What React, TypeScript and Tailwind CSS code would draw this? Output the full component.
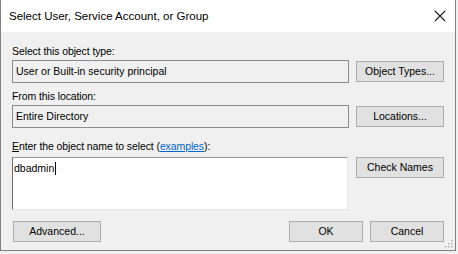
import React from "react";

const font = { fontFamily: '"Liberation Sans", Arial, sans-serif' };

const Button = ({ label, className = "" }: { label: React.ReactNode; className?: string }) => (
  <div
    className={`flex h-[21px] items-center justify-center border border-[#adadad] bg-[#e1e1e1] text-[10.5px] text-black ${className}`}
  >
    {label}
  </div>
);

const ReadOnlyBox = ({ value }: { value: string }) => (
  <div className="flex h-[23px] w-[337px] items-center border border-[#8c8c8c] bg-[#f0f0f0] pl-[3px] text-[10.5px] text-black">
    {value}
  </div>
);

const Label = ({ children }: { children: React.ReactNode }) => (
  <div className="h-[14px] text-[10.5px] leading-[14px] tracking-[-0.1px] text-black">{children}</div>
);

export default function App() {
  return (
    <div className="h-[254px] w-[458px] overflow-hidden bg-[#f0f0f0]" style={font}>
      <div className="flex h-[251px] w-[456px] flex-col border-x border-b border-[#7f7f7f] bg-[#f0f0f0]">
        <div className="flex h-[32px] shrink-0 items-center justify-between bg-white pl-[8px] pr-[8px]">
          <span className="pt-[1px] text-[11.5px] text-black">Select User, Service Account, or Group</span>
          <svg width="12" height="12" viewBox="0 0 12 12" className="mr-[1px]">
            <path d="M1 1L11 11M11 1L1 11" stroke="#1a1a1a" strokeWidth="1.1" />
          </svg>
        </div>

        <div className="relative flex flex-1 flex-col pl-[11px]">
          <div className="mt-[12px]">
            <Label>Select this object type:</Label>
          </div>
          <div className="mt-[2px] flex items-center gap-[7px]">
            <ReadOnlyBox value="User or Built-in security principal" />
            <Button label="Object Types..." className="w-[88px]" />
          </div>

          <div className="mt-[6px]">
            <Label>From this location:</Label>
          </div>
          <div className="mt-[2px] flex items-center gap-[7px]">
            <ReadOnlyBox value="Entire Directory" />
            <Button label="Locations..." className="w-[88px]" />
          </div>

          <div className="mt-[11px]">
            <Label>
              <span className="underline">E</span>nter the object name to select (
              <span className="text-[#0066cc] underline">examples</span>):
            </Label>
          </div>
          <div className="mt-[4px] flex items-start gap-[8px]">
            <div className="h-[53px] w-[336px] border border-b-[#e3e3e3] border-l-[#6d6d6d] border-r-[#e3e3e3] border-t-[#9a9a9a] bg-white pl-[1px] pt-[3px]">
              <div className="flex h-[14px] items-center text-[10.5px] leading-[14px] text-black">
                dbadmin
                <span className="ml-[1px] inline-block h-[13px] w-[1px] bg-black" />
              </div>
            </div>
            <Button label="Check Names" className="h-[20px] w-[88px]" />
          </div>

          <div className="mt-[11px] flex items-center pr-[11px]">
            <Button label="Advanced..." className="ml-[1px] w-[88px]" />
            <div className="flex-1" />
            <Button label="OK" className="w-[74px]" />
            <Button label="Cancel" className="ml-[7px] w-[74px]" />
          </div>

          <svg width="8" height="8" viewBox="0 0 8 8" className="absolute bottom-[2px] right-[2px]">
            <g fill="#b4b4b4">
              <rect x="6" y="0" width="1.5" height="1.5" />
              <rect x="3" y="3" width="1.5" height="1.5" />
              <rect x="6" y="3" width="1.5" height="1.5" />
              <rect x="0" y="6" width="1.5" height="1.5" />
              <rect x="3" y="6" width="1.5" height="1.5" />
              <rect x="6" y="6" width="1.5" height="1.5" />
            </g>
          </svg>
        </div>
      </div>
    </div>
  );
}
